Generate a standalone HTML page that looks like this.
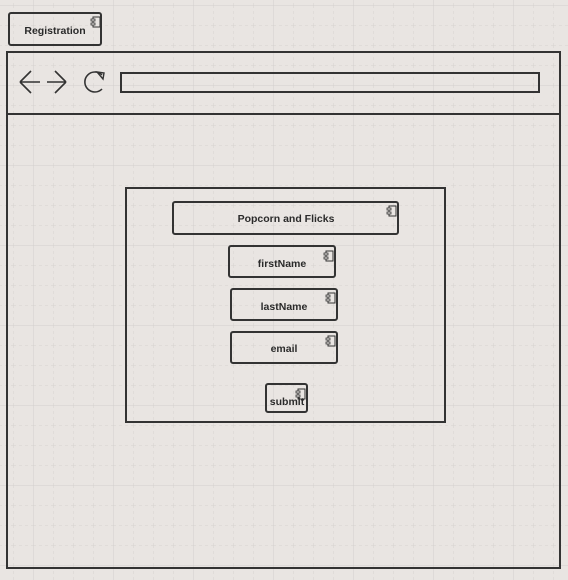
<!DOCTYPE html>
<html><head><style>
html,body{margin:0;padding:0;width:568px;height:580px;overflow:hidden;background:#e9e5e2;font-family:"Liberation Sans",sans-serif}
</style></head><body>
<svg width="568" height="580" viewBox="0 0 568 580" xmlns="http://www.w3.org/2000/svg" style="position:absolute;left:0;top:0">
<defs>
<pattern id="minor" x="13" y="5" width="20" height="20" patternUnits="userSpaceOnUse">
<path d="M0 0V20M0 0H20" fill="none" stroke="#d6d3d0" stroke-width="1" stroke-dasharray="3 3"/>
</pattern>
<pattern id="major" x="33" y="5" width="80" height="80" patternUnits="userSpaceOnUse">
<path d="M0 0V80M0 0H80" fill="none" stroke="#d3d0cd" stroke-width="1"/>
</pattern>
<g id="ic"><rect x="0" y="0" width="7" height="10" fill="#e9e5e2" stroke="#333" stroke-width="1"/><rect x="-2" y="2" width="4" height="2" fill="#e9e5e2" stroke="#333" stroke-width="0.8"/><rect x="-2" y="6" width="4" height="2" fill="#e9e5e2" stroke="#333" stroke-width="0.8"/></g>
</defs>
<rect width="568" height="580" fill="url(#minor)"/>
<rect width="568" height="580" fill="url(#major)"/>
<g fill="none" stroke="#333" stroke-width="2">
<rect x="9" y="13" width="92" height="32" rx="2"/>
<rect x="7" y="52" width="553" height="516"/>
<line x1="7" y1="114" x2="560" y2="114"/>
<rect x="121" y="73" width="418" height="19"/>
<rect x="126" y="188" width="319" height="234"/>
<rect x="173" y="202" width="225" height="32" rx="2"/>
<rect x="229" y="246" width="106" height="31" rx="2"/>
<rect x="231" y="289" width="106" height="31" rx="2"/>
<rect x="231" y="332" width="106" height="31" rx="2"/>
<rect x="266" y="384" width="41" height="28" rx="2"/>
<path d="M20 82H40M20 82L31 71M20 82L31 93" stroke-width="1.6"/>
<path d="M47 82H66M66 82L55 71M66 82L55 93" stroke-width="1.6"/>
<path d="M102 75A10 10 0 1 0 102 89" stroke-width="1.6"/>
</g>
<path d="M97 72L104 73L103 79Z" fill="none" stroke="#333" stroke-width="1.4"/>
<use href="#ic" x="93" y="17"/>
<use href="#ic" x="389" y="206"/>
<use href="#ic" x="326" y="251"/>
<use href="#ic" x="328" y="293"/>
<use href="#ic" x="328" y="336"/>
<use href="#ic" x="298" y="389"/>
<g font-family="Liberation Sans, sans-serif" font-weight="bold" font-size="10.5" fill="#2a2a2a" text-anchor="middle">
<text x="55" y="34">Registration</text>
<text x="286" y="222">Popcorn and Flicks</text>
<text x="282" y="267">firstName</text>
<text x="284" y="310">lastName</text>
<text x="284" y="352">email</text>
<text x="287" y="405">submit</text>
</g>
</svg>
</body></html>
